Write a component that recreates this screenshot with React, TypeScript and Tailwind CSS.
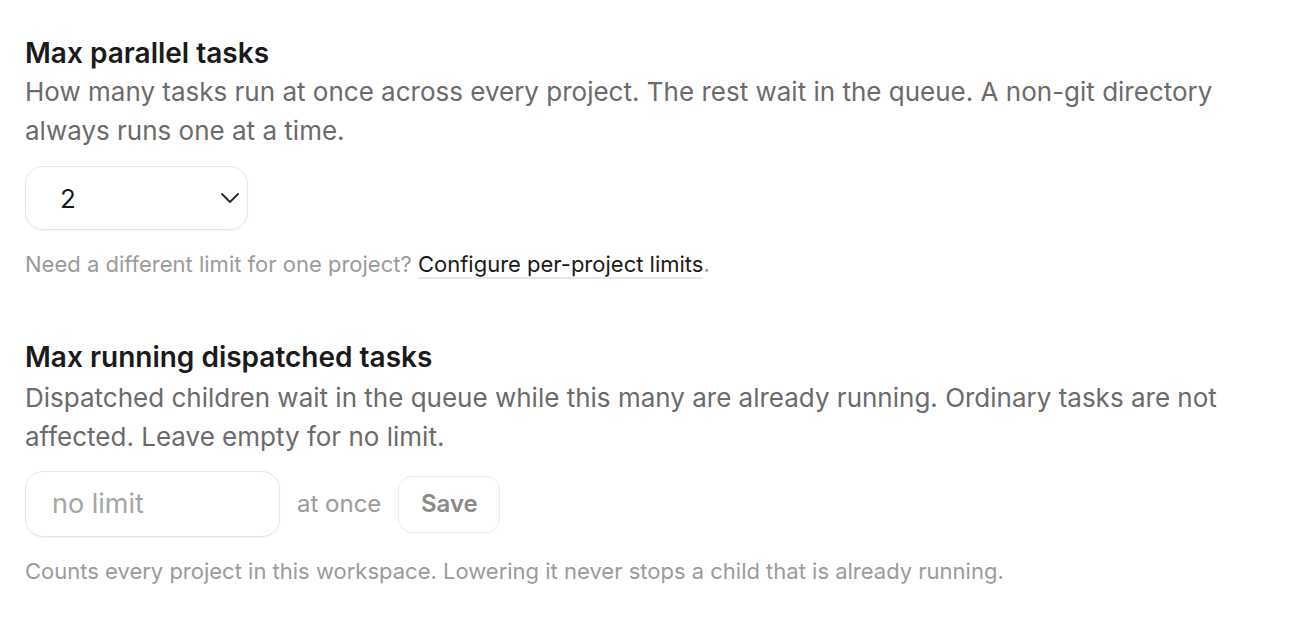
import React from "react";

function Chevron() {
  return (
    <svg width="18" height="10" viewBox="0 0 18 10" fill="none" className="shrink-0">
      <polyline points="1,1 9,9 17,1" stroke="#262626" strokeWidth="1.8" strokeLinecap="round" strokeLinejoin="round" />
    </svg>
  );
}

export default function App() {
  return (
    <div
      className="min-h-[620px] w-[1300px] bg-white pl-[25px] pt-[34px]"
      style={{ fontFamily: "Inter, 'Noto Sans', sans-serif" }}
    >
      <section>
        <h2 className="text-[28px] font-semibold leading-[39px] text-[#1a1a1a]">Max parallel tasks</h2>
        <p className="-mt-[1px] text-[26px] leading-[39px] text-[#6b6b6b]">
          How many tasks run at once across every project. The rest wait in the queue. A non-git directory
          <br />
          always runs one at a time.
        </p>
        <div className="mt-[16px] flex h-[64px] w-[223px] items-center justify-between rounded-[18px] border border-[#e6e6e6] bg-white pl-[34px] pr-[8px] shadow-[0_1px_2px_rgba(0,0,0,0.04)]">
          <span className="text-[26px] text-[#1a1a1a]">2</span>
          <Chevron />
        </div>
        <p className="mt-[18px] text-[22px] leading-[33px] text-[#9b9b9b]">
          Need a different limit for one project?{" "}
          <span className="border-b-2 border-[#e8e8e8] text-[#1a1a1a]">Configure per-project limits</span>.
        </p>
      </section>

      <section className="mt-[57px]">
        <h2 className="text-[28px] font-semibold leading-[39px] text-[#1a1a1a]">Max running dispatched tasks</h2>
        <p className="mt-[1px] text-[26px] leading-[39px] text-[#6b6b6b]">
          Dispatched children wait in the queue while this many are already running. Ordinary tasks are not
          <br />
          affected. Leave empty for no limit.
        </p>
        <div className="mt-[15px] flex items-center">
          <div className="flex h-[66px] w-[255px] items-center rounded-[18px] border border-[#e6e6e6] bg-white pl-[26px] shadow-[0_1px_2px_rgba(0,0,0,0.04)]">
            <span className="text-[27px] text-[#a6a6a6]">no limit</span>
          </div>
          <span className="ml-[17px] text-[24px] text-[#9b9b9b]">at once</span>
          <div className="ml-[17px] flex h-[57px] w-[102px] items-center justify-center rounded-[14px] border border-[#ececec] bg-white">
            <span className="text-[24px] font-semibold text-[#8a8a8a]">Save</span>
          </div>
        </div>
        <p className="mt-[18px] text-[22px] leading-[33px] text-[#9b9b9b]">
          Counts every project in this workspace. Lowering it never stops a child that is already running.
        </p>
      </section>
    </div>
  );
}
